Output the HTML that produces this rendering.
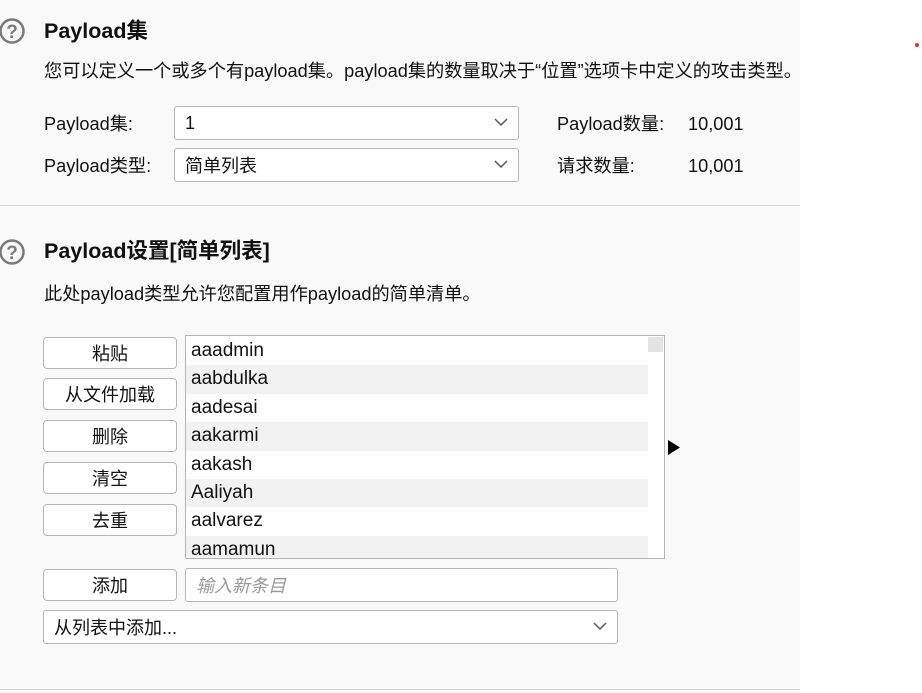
<!DOCTYPE html>
<html><head><meta charset="utf-8"><style>
body{margin:0;width:922px;height:693px;background:#fff;font-family:"Liberation Sans","Noto Sans CJK SC",sans-serif;color:#111;position:relative;overflow:hidden}
.bg{position:absolute;left:0;top:0;width:800px;height:693px;background:#f9f9f9}
.a{position:absolute;white-space:nowrap;line-height:22px}
.t{font-size:21.5px;font-weight:bold}
.d{font-size:18.2px}
.box{position:absolute;background:#fff;border:1px solid #b5b5b5;border-radius:3px;box-sizing:border-box;font-size:18px;padding-left:10px;display:flex;align-items:center}
.btn{position:absolute;left:43px;width:134px;height:32px;background:#fff;border:1px solid #b5b5b5;border-radius:4px;box-sizing:border-box;font-size:18px;display:flex;align-items:center;justify-content:center}
.hr{position:absolute;left:0;width:800px;height:1px;background:#d3d3d3}
.row{height:28.4px;line-height:28.4px;padding-left:5px;font-size:19px;width:457px}
.row:nth-child(even){background:#f2f2f2}
.chev{position:absolute;right:10px;top:10px}
</style></head><body>
<div class="bg"></div>
<svg class="a" style="left:0;top:18px" width="28" height="28"><circle cx="12" cy="13" r="11.5" fill="none" stroke="#7a7a7a" stroke-width="2.5"/><text x="12" y="20" text-anchor="middle" font-size="19" font-weight="bold" font-family="Liberation Sans" fill="#7a7a7a">?</text></svg>
<div class="a t" style="left:44px;top:20px">Payload集</div>
<div class="a d" style="left:44px;top:60px">您可以定义一个或多个有payload集。payload集的数量取决于“位置”选项卡中定义的攻击类型。</div>
<div class="a d" style="left:44px;top:113px">Payload集:</div>
<div class="a d" style="left:44px;top:155px">Payload类型:</div>
<div class="box" style="left:174px;top:106px;width:345px;height:34px">1<svg class="chev" width="14" height="10"><path d="M1 2l6 6 6-6" fill="none" stroke="#555" stroke-width="1.5"/></svg></div>
<div class="box" style="left:174px;top:148px;width:345px;height:34px">简单列表<svg class="chev" width="14" height="10"><path d="M1 2l6 6 6-6" fill="none" stroke="#555" stroke-width="1.5"/></svg></div>
<div class="a d" style="left:557px;top:113px">Payload数量:</div>
<div class="a d" style="left:688px;top:113px">10,001</div>
<div class="a d" style="left:557px;top:155px">请求数量:</div>
<div class="a d" style="left:688px;top:155px">10,001</div>
<div class="hr" style="top:205px"></div>
<svg class="a" style="left:0;top:239px" width="28" height="28"><circle cx="12" cy="13" r="11.5" fill="none" stroke="#7a7a7a" stroke-width="2.5"/><text x="12" y="20" text-anchor="middle" font-size="19" font-weight="bold" font-family="Liberation Sans" fill="#7a7a7a">?</text></svg>
<div class="a t" style="left:44px;top:240px">Payload设置[简单列表]</div>
<div class="a d" style="left:44px;top:283px">此处payload类型允许您配置用作payload的简单清单。</div>
<div class="btn" style="top:337px">粘贴</div>
<div class="btn" style="top:378px">从文件加载</div>
<div class="btn" style="top:420px">删除</div>
<div class="btn" style="top:462px">清空</div>
<div class="btn" style="top:504px">去重</div>
<div class="a" style="left:185px;top:335px;width:480px;height:224px;border:1px solid #b5b5b5;box-sizing:border-box;background:#fff;overflow:hidden">
<div style="position:absolute;left:462px;top:1px;width:15px;height:15px;background:#e3e3e3"></div>
<div style="position:absolute;left:0;top:1px">
<div class="row">aaadmin</div><div class="row">aabdulka</div><div class="row">aadesai</div><div class="row">aakarmi</div><div class="row">aakash</div><div class="row">Aaliyah</div><div class="row">aalvarez</div><div class="row">aamamun</div>
</div></div>
<svg class="a" style="left:667px;top:439px" width="14" height="17"><path d="M1 1L13 8.5L1 16Z" fill="#000"/></svg>
<div class="btn" style="top:569px">添加</div>
<div class="box" style="left:185px;top:568px;width:433px;height:34px;color:#999;font-style:italic">输入新条目</div>
<div class="box" style="left:43px;top:610px;width:575px;height:34px">从列表中添加...<svg class="chev" width="14" height="10"><path d="M1 2l6 6 6-6" fill="none" stroke="#555" stroke-width="1.5"/></svg></div>
<div class="hr" style="top:689px"></div>
<div class="a" style="left:915px;top:43px;width:4px;height:4px;border-radius:2px;background:#e03030"></div>
</body></html>
